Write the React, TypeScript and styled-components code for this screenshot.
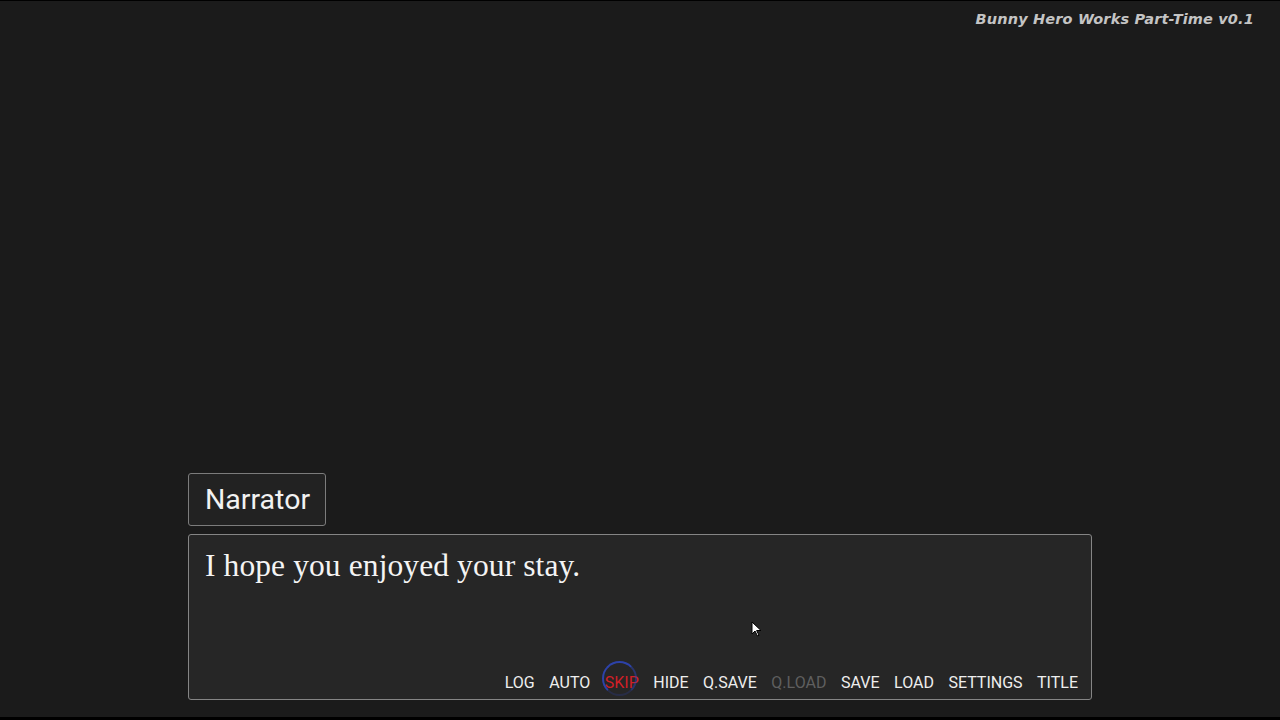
import React from 'react';
import styled, { createGlobalStyle } from 'styled-components';

const GlobalStyle = createGlobalStyle`
  html, body {
    margin: 0;
    padding: 0;
    background: #000;
  }
  body {
    font-family: Roboto, "Liberation Sans", sans-serif;
  }
`;

const Screen = styled.div`
  position: relative;
  width: 1280px;
  height: 716px;
  margin-top: 1px;
  background: #1b1b1b;
  display: flex;
  flex-direction: column;
  overflow: hidden;
`;

const TopBar = styled.div`
  display: flex;
  justify-content: flex-end;
  padding: 10px 26px 0 0;
`;

const GameTitle = styled.div`
  font-family: "DejaVu Sans", Verdana, sans-serif;
  font-weight: bold;
  font-style: italic;
  font-size: 14.5px;
  color: #c4c4c4;
  letter-spacing: 0.15px;
`;

const Stage = styled.div`
  flex: 1;
`;

const DialogueArea = styled.div`
  width: 904px;
  margin: 0 auto 17px;
  display: flex;
  flex-direction: column;
  gap: 8px;
`;

const NameBox = styled.div`
  align-self: flex-start;
  box-sizing: border-box;
  width: 138px;
  height: 53px;
  padding: 0 16px;
  display: flex;
  align-items: center;
  background: #222;
  border: 1.5px solid #7c7c7c;
  border-radius: 3px;
  color: #f2f2f2;
  font-size: 28.5px;
`;

const TextBox = styled.div`
  position: relative;
  box-sizing: border-box;
  height: 166px;
  padding: 13px 13px 5px 16px;
  background: #262626;
  border: 1.5px solid #858585;
  border-radius: 3px;
  display: flex;
  flex-direction: column;
  justify-content: space-between;
`;

const Line = styled.div`
  font-family: "Liberation Serif", "Times New Roman", serif;
  font-size: 31.5px;
  color: #f4f4f4;
  letter-spacing: 0.1px;
`;

const Menu = styled.div`
  display: flex;
  justify-content: flex-end;
  gap: 14.5px;
`;

const MenuButton = styled.span<{ $state?: 'active' | 'disabled' }>`
  position: relative;
  font-size: 16px;
  line-height: 22px;
  color: ${p => (p.$state === 'active' ? '#d21f26' : p.$state === 'disabled' ? '#5f5f5f' : '#eeeeee')};
`;

const ClickRing = styled.span`
  position: absolute;
  left: -3px;
  top: -11px;
  width: 31px;
  height: 31px;
  border: 2px solid #2f48c0;
  border-bottom-color: rgba(47, 72, 192, 0.25);
  border-right-color: rgba(47, 72, 192, 0.55);
  border-radius: 50%;
  opacity: 0.85;
`;

const Pointer = styled.svg`
  position: absolute;
  left: 751px;
  top: 620px;
`;

const buttons: { label: string; state?: 'active' | 'disabled' }[] = [
  { label: 'LOG' },
  { label: 'AUTO' },
  { label: 'SKIP', state: 'active' },
  { label: 'HIDE' },
  { label: 'Q.SAVE' },
  { label: 'Q.LOAD', state: 'disabled' },
  { label: 'SAVE' },
  { label: 'LOAD' },
  { label: 'SETTINGS' },
  { label: 'TITLE' },
];

export default function App() {
  return (
    <>
      <GlobalStyle />
      <Screen>
        <TopBar>
          <GameTitle>Bunny Hero Works Part-Time v0.1</GameTitle>
        </TopBar>
        <Stage />
        <DialogueArea>
          <NameBox>Narrator</NameBox>
          <TextBox>
            <Line>I hope you enjoyed your stay.</Line>
            <Menu>
              {buttons.map(b => (
                <MenuButton key={b.label} $state={b.state}>
                  {b.state === 'active' && <ClickRing />}
                  {b.label}
                </MenuButton>
              ))}
            </Menu>
          </TextBox>
        </DialogueArea>
        <Pointer width="12" height="17" viewBox="0 0 12 17">
          <path d="M1 1 L1 13 L4 10 L6.5 15 L8 14.3 L5.6 9.5 L10 9.5 Z" fill="#fff" stroke="#000" strokeWidth="1" />
        </Pointer>
      </Screen>
    </>
  );
}
